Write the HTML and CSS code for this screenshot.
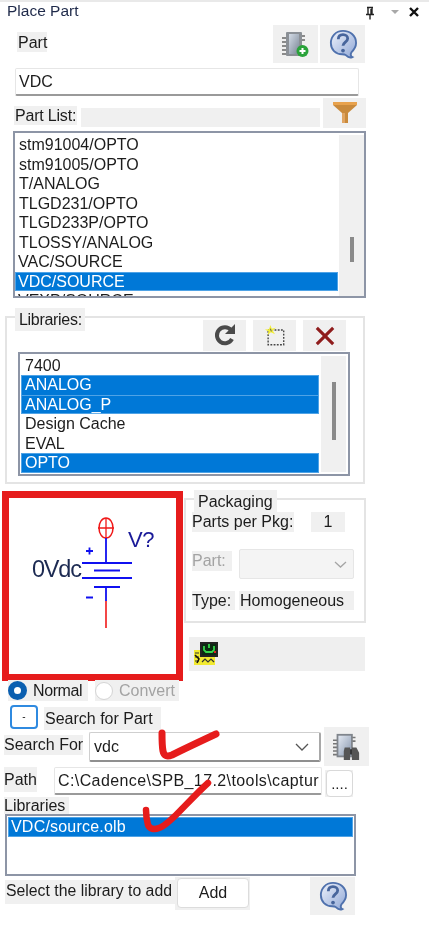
FILE: index.html
```html
<!DOCTYPE html>
<html lang="en">
<head>
<meta charset="utf-8">
<title>Place Part</title>
<link rel="stylesheet" href="styles.css">
</head>
<body>
<main class="panel">
  <header class="title-bar">
    <h1 class="title">Place Part</h1>
    <div class="win-tools">
      <svg class="pin" width="12" height="14" viewBox="0 0 12 14"><path d="M3 1.500h6M4 2v6M8 2v6M2 8.500h8M6 9v4.500M7 3v5" stroke="#222" stroke-width="1.400" fill="none"/></svg>
      <svg class="drop" width="10" height="6" viewBox="0 0 10 6"><path d="M1 1h8L5 5z" fill="#a8a8a8"/></svg>
      <svg class="close" width="10" height="10" viewBox="0 0 10 10"><path d="M1 1l8 8M9 1L1 9" stroke="#111" stroke-width="2.400"/></svg>
    </div>
  </header>

  <div class="row part-row">
    <span class="lbl part-lbl">Part</span>
    <button class="ibtn chip-btn">
      <svg width="28" height="27" viewBox="0 0 28 27"><defs><linearGradient id="chipg" x1="0" x2="1" y1="0" y2="1"><stop offset="0" stop-color="#d3dbe6"/><stop offset="1" stop-color="#7b8796"/></linearGradient></defs><path d="M0 7h5M0 11h5M0 15h5M0 19h5M0 23h5M20 5h3M20 9h3" stroke="#8a8a8a" stroke-width="2"/><rect x="4" y="1" width="16" height="24" rx="1" fill="#8b9096"/><rect x="7" y="3" width="10" height="20" fill="url(#chipg)"/><circle cx="20.500" cy="20" r="6" fill="#2aa33a"/><path d="M20.500 17v6M17.500 20h6" stroke="#fff" stroke-width="2"/></svg>
    </button>
    <button class="ibtn help-btn">
      <svg width="28" height="30" viewBox="0 0 30 32"><defs><linearGradient id="helpg" x1="0" x2="1" y1="0" y2="1"><stop offset="0" stop-color="#eef2fb"/><stop offset="1" stop-color="#8fa7d6"/></linearGradient></defs><path d="M15 2C7 2 2 8 2 15s5 12 12 12c2 0 3 0 4 1 2 2 5 3 7 2-2-1-2-3-1-5 3-3 5-6 5-10C29 7 23 2 15 2z" fill="url(#helpg)" stroke="#4f71ad" stroke-width="2"/><path d="M10 11c0-3 2-5 5-5s5 2 5 4c0 4-5 4-5 8" fill="none" stroke="#47659c" stroke-width="3"/><circle cx="15" cy="23" r="2" fill="#47659c"/></svg>
    </button>
  </div>

  <div class="field part-input">VDC</div>

  <div class="row partlist-row">
    <span class="lbl partlist-lbl">Part List:</span>
    <span class="partlist-bar"></span>
    <button class="ibtn filter-btn">
      <svg width="26" height="24" viewBox="0 0 26 24"><path d="M1 1h24v3l-9 8v10h-6V12L1 4z" fill="#c98a3c"/><path d="M1 1h24v3H1z" fill="#e8a24d"/><path d="M10 12h3v10h-3z" fill="#e0a563"/></svg>
    </button>
  </div>

  <div class="listbox parts">
    <ul class="items">
      <li>stm91004/OPTO</li>
      <li>stm91005/OPTO</li>
      <li>T/ANALOG</li>
      <li>TLGD231/OPTO</li>
      <li>TLGD233P/OPTO</li>
      <li>TLOSSY/ANALOG</li>
      <li class="out">VAC/SOURCE</li>
      <li class="sel out">VDC/SOURCE</li>
      <li class="out">VEXP/SOURCE</li>
    </ul>
    <div class="sbar"><span class="thumb parts-thumb"></span></div>
  </div>

  <section class="group libs">
    <span class="legend libs-legend">Libraries:</span>
    <div class="row libs-tools">
      <button class="ibtn tool">
        <svg width="26" height="26" viewBox="0 0 26 26"><path d="M20 16a8 8 0 1 1-1-9" fill="none" stroke="#4a4a4a" stroke-width="4"/><path d="M23 1v10H13z" fill="#4a4a4a"/></svg>
      </button>
      <button class="ibtn tool">
        <svg width="22" height="22" viewBox="0 0 24 24"><rect x="4.500" y="5.500" width="17" height="16" fill="none" stroke="#444" stroke-width="1.500" stroke-dasharray="2 1.500"/><path d="M7 0l1.500 4L13 3 9.500 6 12 10 7.500 8 4 11l1-4-4-2 4.500-.5z" fill="#f3ee3a"/><path d="M7 4l1 3" stroke="#555"/></svg>
      </button>
      <button class="ibtn tool">
        <svg width="20" height="20" viewBox="0 0 22 22"><path d="M2 2l18 18M20 2L2 20" stroke="#8f1c1c" stroke-width="3.400"/></svg>
      </button>
    </div>
    <div class="listbox libs-list">
      <ul class="items">
        <li>7400</li>
        <li class="sel joined">ANALOG</li>
        <li class="sel">ANALOG_P</li>
        <li>Design Cache</li>
        <li>EVAL</li>
        <li class="sel">OPTO</li>
      </ul>
      <div class="sbar"><span class="thumb libs-thumb"></span></div>
    </div>
  </section>

  <div class="row middle">
    <div class="preview">
      <svg class="symbol" width="166" height="175" viewBox="9 499 166 175">
        <ellipse cx="106" cy="529" rx="7" ry="10" fill="none" stroke="#f01818" stroke-width="1.500"/>
        <path d="M98 529h16M106 519v20" stroke="#f01818" stroke-width="1.300"/>
        <path d="M106 539v25M82 564h50M94 571.500h26M82 579h50M94 588h26M106 588v14M86 552h7M89.500 548.500v7M86 598.500h7" stroke="#1010f0" stroke-width="1.800" fill="none"/>
        <path d="M106 602v27" stroke="#f01818" stroke-width="1.600"/>
        <text x="32" y="578" class="sym-val">0Vdc</text>
        <text x="128" y="548" class="sym-ref">V?</text>
      </svg>
    </div>
    <div class="side">
      <section class="group pack">
        <span class="legend pack-legend">Packaging</span>
        <div class="row pp-row">
          <span class="lbl pp-lbl">Parts per Pkg:</span>
          <span class="lbl pp-val">1</span>
        </div>
        <div class="row ppart-row">
          <span class="lbl disabled ppart-lbl">Part:</span>
          <span class="select dis-select"><svg width="13" height="7" viewBox="0 0 13 7"><path d="M1 1l5.500 5L12 1" fill="none" stroke="#a5a5a5" stroke-width="1.300"/></svg></span>
        </div>
        <div class="row type-row">
          <span class="lbl type-lbl">Type:</span>
          <span class="lbl type-val">Homogeneous</span>
        </div>
      </section>
      <div class="sch-bar">
        <svg width="24" height="25" viewBox="0 0 24 25"><path d="M0 9h6v5h15v10H0z" fill="#f2ea30"/><path d="M1 12h4M1 16h4M1 20h4M8 21l3-3 3 3 3-3 3 3" stroke="#333" stroke-width="1.200" fill="none"/><rect x="6" y="1" width="18" height="15" fill="#222"/><rect x="8" y="3" width="14" height="11" fill="#0b2a12"/><path d="M10 5v4l2 2h6l2-2V5M15 3v4" stroke="#35d64a" stroke-width="1.800" fill="none"/><path d="M20 11h2" stroke="#d22" stroke-width="2"/><path d="M1 14l4 4-2 4" stroke="#111" stroke-width="1.500" fill="none"/></svg>
      </div>
    </div>
  </div>

  <div class="row radios">
    <label class="lbl radio-lbl normal"><span class="radio on"></span>Normal</label>
    <label class="lbl radio-lbl disabled convert"><span class="radio"></span>Convert</label>
  </div>

  <div class="row search-head">
    <button class="mini">-</button>
    <span class="lbl sfp">Search for Part</span>
  </div>

  <div class="row search-row">
    <span class="lbl sf-lbl">Search For</span>
    <span class="select sf-select"><span>vdc</span><svg width="14" height="8" viewBox="0 0 14 8"><path d="M1 1l6 6 6-6" fill="none" stroke="#555" stroke-width="1.300"/></svg></span>
    <button class="ibtn bino-btn">
      <svg width="27" height="27" viewBox="0 0 30 30"><defs><linearGradient id="binog" x1="0" x2="1" y1="0" y2="1"><stop offset="0" stop-color="#e2e8f1"/><stop offset="1" stop-color="#8a99b0"/></linearGradient></defs><path d="M0 8h6M0 12h6M0 16h6M0 20h6M0 24h6M20 5h5M20 9h5" stroke="#777" stroke-width="1.800"/><rect x="4" y="1" width="18" height="26" fill="#80858c"/><rect x="6" y="3" width="14" height="22" fill="url(#binog)"/><path d="M13 16h6v14h-7V20zM21 16h5l3 6v8h-8z" fill="#555"/><path d="M19 18h2v6h-2z" fill="#2c2c2c"/></svg>
    </button>
  </div>

  <div class="row path-row">
    <span class="lbl path-lbl">Path</span>
    <span class="field path-input">C:\Cadence\SPB_17.2\tools\captur</span>
    <span class="dots-wrap"><button class="dots">....</button></span>
  </div>

  <span class="lbl libs2-lbl">Libraries</span>
  <div class="listbox result">
    <div class="result-sel">VDC/source.olb</div>
  </div>

  <div class="row foot">
    <span class="lbl foot-lbl">Select the library to add</span>
    <span class="add-wrap"><button class="add">Add</button></span>
    <button class="ibtn help-foot">
      <svg width="28" height="30" viewBox="0 0 30 32"><path d="M15 2C7 2 2 8 2 15s5 12 12 12c2 0 3 0 4 1 2 2 5 3 7 2-2-1-2-3-1-5 3-3 5-6 5-10C29 7 23 2 15 2z" fill="url(#helpg)" stroke="#4f71ad" stroke-width="2"/><path d="M10 11c0-3 2-5 5-5s5 2 5 4c0 4-5 4-5 8" fill="none" stroke="#47659c" stroke-width="3"/><circle cx="15" cy="23" r="2" fill="#47659c"/></svg>
    </button>
  </div>

  <svg class="marks" width="429" height="937" viewBox="0 0 429 937">
    <path d="M162 733c0 8 0 13 1 18 1 5 4 6 9 4 14-7 29-14 44-21" fill="none" stroke="#e61c1c" stroke-width="7" stroke-linecap="round" stroke-linejoin="round"/>
    <path d="M146 810c0 6 1 11 2 15 2 4 6 5 11 3 6-2 10-7 16-12 11-11 22-23 33-33" fill="none" stroke="#e61c1c" stroke-width="6.500" stroke-linecap="round" stroke-linejoin="round"/>
  </svg>
</main>
</body>
</html>
```

FILE: styles.css
```css
* { box-sizing: border-box; }
html, body { margin: 0; padding: 0; background: #fff; }
body { font-family: "Liberation Sans", Arial, sans-serif; font-size: 16px; color: #1c1c1c; }

.panel { position: relative; width: 429px; height: 937px; overflow: hidden; background: #fff; filter: blur(0.4px); }

.row { display: flex; }
.lbl { display: inline-flex; align-items: center; background: #f0f0f0; white-space: nowrap; line-height: 1; }
.disabled { color: #a3a3a3; }

button { font: inherit; color: inherit; padding: 0; margin: 0; }
.ibtn { display: flex; align-items: center; justify-content: center; background: #f0f0f0; border: 0; flex: none; }

/* title */
.title-bar { display: flex; justify-content: space-between; height: 25px; border-top: 2px solid #e9e9e9; padding-left: 7px; padding-right: 10px; }
.title { margin: 0; font-size: 15.500px; font-weight: 400; line-height: 17px; color: #1f2a4a; }
.win-tools { display: flex; align-items: center; gap: 14px; height: 20px; }
.pin { margin-top: 2px; }
.close { margin-left: -5px; }

/* top */
.part-row { height: 38px; padding-left: 17px; width: 365px; }
.part-lbl { width: 30px; height: 20px; margin-top: 7px; margin-right: auto; padding: 1px 0 0 1px; }
.chip-btn { width: 45px; height: 38px; margin-right: 2px; }
.help-btn { width: 45px; height: 38px; }

.field { background: #fff; border: 1px solid #e6e6e6; border-bottom: 2px solid #9a9a9a; border-radius: 2px; display: flex; align-items: center; }
.part-input { margin: 5px 0 0 15px; width: 344px; height: 28px; padding-left: 3px; }

.partlist-row { margin: 2px 0 0 14px; height: 30px; width: 352px; }
.partlist-lbl { width: 63px; height: 19px; margin-top: 8px; padding-left: 1px; letter-spacing: -0.2px; }
.partlist-bar { width: 239px; height: 19px; margin: 10px 0 0 4px; background: #f0f0f0; }
.filter-btn { width: 43px; height: 30px; margin-left: 3px; }

/* listboxes */
.listbox { display: flex; background: #fff; border: 2px solid #8d95a6; overflow: hidden; }
.items { list-style: none; margin: 0; padding: 0; flex: 1; min-width: 0; }
.items li { height: 19.500px; line-height: 19.500px; padding-left: 4px; white-space: nowrap; }
.items li.out { padding-left: 3px; }
.items li.sel { background: #0078d7; color: #fff; box-shadow: inset 0 0 0 1px #4fa3e6; }
.items li.joined { box-shadow: inset 1px 0 0 #4fa3e6, inset 0 1px 0 #4fa3e6, inset -1px 0 0 #4fa3e6; }
.sbar { flex: none; width: 25px; background: #f0f0f0; position: relative; display: flex; justify-content: center; }
.thumb { display: block; width: 4px; background: #8a8a8a; }

.parts { margin: 3px 0 0 13px; width: 353px; height: 167px; padding-top: 2px; }
.parts-thumb { margin-top: 102px; height: 25px; }
.parts .sbar { margin-left: 1px; }

/* fieldset groups */
.group { position: relative; border: 2px solid #e4e4e4; }
.legend { position: absolute; display: inline-flex; align-items: center; background: #f0f0f0; line-height: 1; }

.libs { margin: 18px 0 0 5px; width: 360px; height: 168px; padding: 2px 0 0 11px; }
.libs-legend { left: 8px; top: -10px; width: 70px; height: 23px; padding-left: 4px; letter-spacing: -0.3px; }
.libs-tools { margin-left: 185px; gap: 7px; height: 32px; }
.tool { width: 43px; height: 31px; }
.libs-list { width: 332px; height: 124px; padding: 1.500px 2px 2px 1px; }
.libs-list .items li { padding-left: 4px; }
.libs-list .sbar { margin-left: 2px; width: 25px; }
.libs-thumb { margin-top: 26px; height: 58px; }

/* middle */
.middle { margin: 7px 0 0 2px; height: 191px; align-items: flex-start; }
.preview { flex: none; width: 181px; height: 190px; border: 7.500px solid #e61c1c; background: #fff; }
.symbol { display: block; }
.sym-val { font-family: "Liberation Sans", Arial, sans-serif; font-size: 23.500px; letter-spacing: -1.200px; fill: #1c2a52; }
.sym-ref { font-family: "Liberation Sans", Arial, sans-serif; font-size: 22px; letter-spacing: -0.500px; fill: #1a1a99; }

.side { margin-left: 1px; width: 182px; }
.pack { margin-top: 7px; height: 125px; width: 182px; padding: 12px 0 0 6px; }
.pack-legend { left: 8px; top: -10px; width: 83px; height: 23px; padding-left: 4px; }
.pp-row { height: 20px; }
.pp-lbl { width: 102px; height: 20px; }
.pp-val { width: 34px; height: 20px; margin-left: 17px; justify-content: center; }
.ppart-row { margin-top: 17px; height: 30px; }
.ppart-lbl { width: 40px; height: 20px; margin-top: 2px; }
.select { display: flex; align-items: center; justify-content: flex-end; background: #fff; }
.dis-select { width: 115px; height: 30px; margin-left: 7px; background: #f4f4f4; border: 1px solid #e6e6e6; border-radius: 2px; padding-right: 6px; }
.type-row { margin-top: 12px; }
.type-lbl { width: 43px; height: 19px; }
.type-val { width: 115px; height: 19px; margin-left: 4px; padding-left: 1px; }
.sch-bar { margin: 14px 0 0 5px; width: 176px; height: 34px; background: #efefef; padding: 4px 0 0 5px; }
.sch-bar svg { display: block; }

/* radios */
.radios { margin: -2px 0 0 8px; height: 21px; }
.radio-lbl { height: 21px; }
.normal { width: 80px; padding-left: 0; letter-spacing: -0.4px; }
.convert { width: 84px; margin-left: 7px; }
.radio { display: block; flex: none; width: 19px; height: 19px; border-radius: 50%; border: 1.500px solid #d4d4d4; background: #fff; margin-right: 6px; }
.convert .radio { width: 18px; height: 18px; margin-right: 6px; }
.radio.on { border: 6px solid #0a5fb0; margin-right: 6px; }

.search-head { margin: 4px 0 0 10px; height: 25px; }
.mini { width: 28px; height: 24px; background: #fff; border: 2px solid #2f8ae0; border-radius: 4px; line-height: 18px; font-size: 10px; }
.sfp { width: 117px; height: 23px; margin: 2px 0 0 6px; padding-left: 1px; }

.search-row { margin: -3px 0 0 4px; height: 39px; width: 365px; }
.sf-lbl { width: 79px; height: 20px; margin-top: 8px; }
.sf-select { width: 232px; height: 30px; margin: 5px 0 0 6px; border: 1px solid #cfcfcf; border-bottom: 2px solid #8f8f8f; border-right: 2px solid #a8a8a8; border-radius: 2px; justify-content: space-between; padding: 0 10px 0 4px; }
.bino-btn { width: 45px; height: 39px; margin-left: 3px; }

.path-row { margin: 1px 0 0 4px; height: 31px; }
.path-lbl { width: 33px; height: 25px; }
.path-input { width: 268px; height: 28px; margin-left: 17px; padding: 0 0 0 3px; white-space: nowrap; letter-spacing: 0.4px; }
.dots-wrap { background: #f0f0f0; margin-left: 3px; height: 27px; margin-top: 3px; padding-left: 1px; }
.dots { display: block; width: 27px; height: 27px; background: #fff; border: 1px solid #d9d9d9; border-radius: 4px; line-height: 26px; font-size: 15px; }

.libs2-lbl { display: flex; margin: -1px 0 0 4px; width: 65px; height: 17px; }
.result { margin-left: 5px; width: 351px; height: 62px; padding: 1px; }
.result-sel { width: 100%; height: 20px; line-height: 20px; background: #0078d7; color: #fff; padding-left: 3px; letter-spacing: 0.2px; box-shadow: inset 0 0 0 1px #4fa3e6; }

.foot { margin: 1px 0 0 5px; height: 38px; }
.foot-lbl { width: 171px; height: 24px; margin-top: 3px; padding: 0 0 3px 1px; font-size: 15.800px; }
.add-wrap { background: #f0f0f0; width: 75px; height: 33px; padding: 1px 2px; margin-left: -1px; }
.add { display: block; width: 72px; height: 30px; background: #fff; border: 1px solid #dcdcdc; border-radius: 4px; }
.help-foot { width: 45px; height: 38px; margin-left: 60px; }

.marks { position: absolute; left: 0; top: 0; pointer-events: none; }
```
